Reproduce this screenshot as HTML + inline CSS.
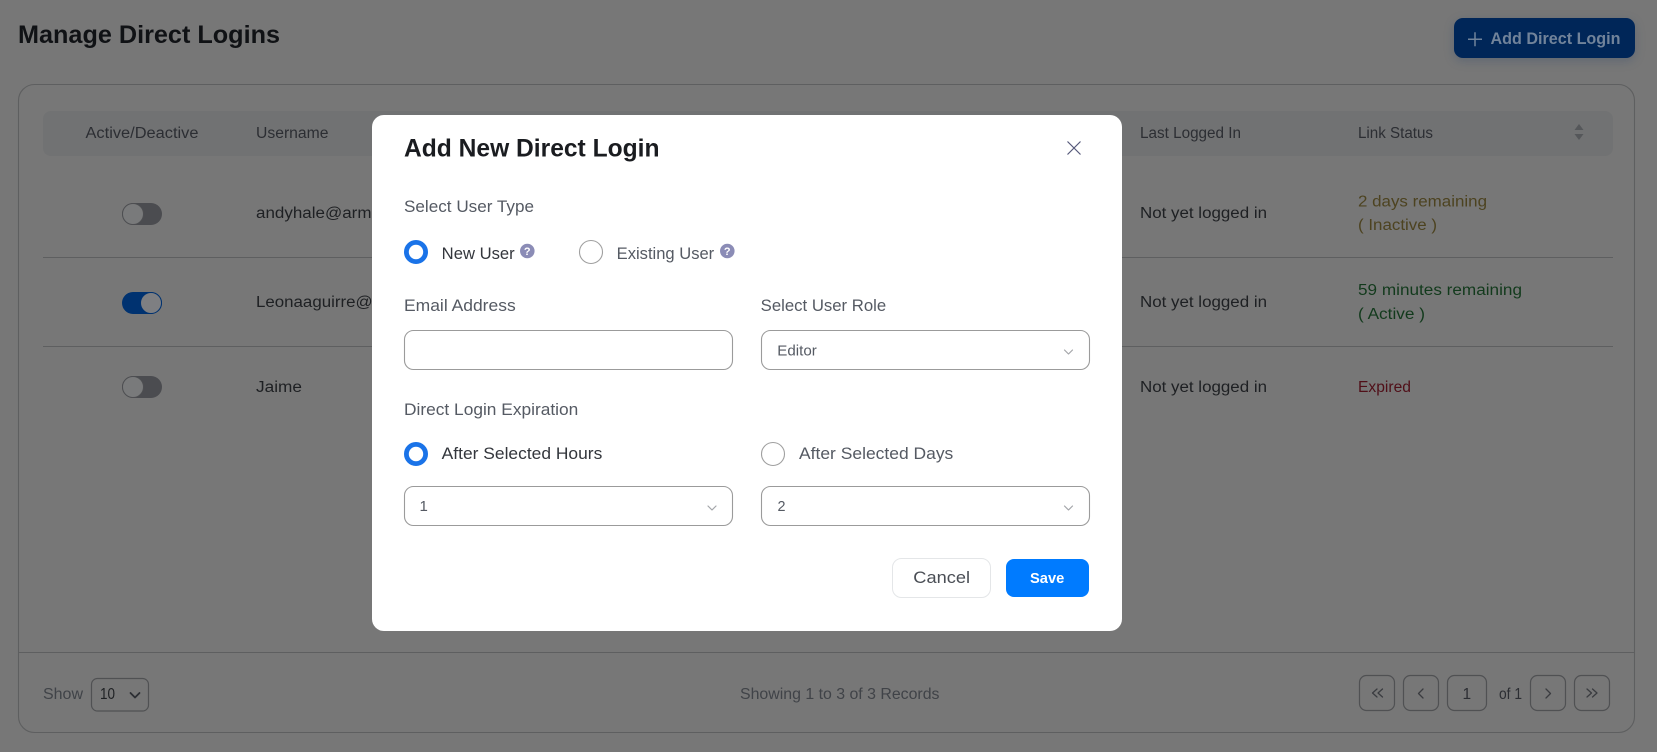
<!DOCTYPE html>
<html><head><meta charset="utf-8"><title>Manage Direct Logins</title>
<style>
html,body{margin:0;padding:0;background:#777777;width:1657px;height:752px;overflow:hidden}
svg{display:block}
text{font-family:"Liberation Sans",sans-serif;font-size:15.5px;fill:#1e2023}
.h{fill:#2c2e33}
.l{font-size:16.5px;fill:#555a63}
.d{font-size:16.5px;fill:#33363c}
.m{fill:#404348;font-size:15.5px}
.sq{fill:none;stroke:#505153;stroke-width:1.2}
.ch{fill:none;stroke:#3a3c40;stroke-width:1.3;stroke-linecap:round;stroke-linejoin:round}
.sc{fill:none;stroke:#a4a6aa;stroke-width:1.2;stroke-linecap:round;stroke-linejoin:round}
.ip{fill:#fff;stroke:#9b9b9b;stroke-width:1.1}
</style></head><body>
<svg width="1657" height="752" viewBox="0 0 1657 752" xmlns="http://www.w3.org/2000/svg">
<rect width="1657" height="752" fill="#777777"/>
<text x="18" y="43" textLength="262" lengthAdjust="spacingAndGlyphs" style="font-size:25px;font-weight:700;fill:#101215">Manage Direct Logins</text>

<rect x="1454" y="18" width="181" height="40" rx="9" fill="#002658" style="filter:drop-shadow(0 3px 5px rgba(0,40,100,.2))"/>
<path d="M1468 39.2h14M1475 32.2v14" stroke="#71839a" stroke-width="1.5" fill="none"/>
<text x="1490.5" y="44" textLength="130" lengthAdjust="spacingAndGlyphs" style="font-size:17px;font-weight:700;fill:#71839a">Add Direct Login</text>

<rect x="18.5" y="84.5" width="1616" height="648" rx="16" fill="#777777" stroke="#5e5f60" stroke-width="1.1"/>
<rect x="43" y="111" width="1570" height="45" rx="8" fill="#717273"/>
<text class="h" x="85.5" y="138" textLength="113" lengthAdjust="spacingAndGlyphs">Active/Deactive</text>
<text class="h" x="256" y="138" textLength="72.5" lengthAdjust="spacingAndGlyphs">Username</text>
<text class="h" x="1140" y="138" textLength="101" lengthAdjust="spacingAndGlyphs">Last Logged In</text>
<text class="h" x="1358" y="138" textLength="75" lengthAdjust="spacingAndGlyphs">Link Status</text>
<path d="M1579 124l4.5 6h-9zM1579 140l4.5-6h-9z" fill="#55575a"/>

<path d="M43 257.5H1613M43 346.5H1613M18 652.5H1635" stroke="#5e5f60" stroke-width="1" fill="none"/>

<rect x="122" y="203" width="40" height="22" rx="11" fill="#4b4c50"/>
<circle cx="133" cy="214" r="10.5" fill="#797a7b" stroke="#4e4f52" stroke-width="1"/>
<rect x="122" y="292" width="40" height="22" rx="11" fill="#003270"/>
<circle cx="151" cy="303" r="10.5" fill="#7e7f82" stroke="#003270" stroke-width="1"/>
<rect x="122" y="376" width="40" height="22" rx="11" fill="#4b4c50"/>
<circle cx="133" cy="387" r="10.5" fill="#797a7b" stroke="#4e4f52" stroke-width="1"/>

<text x="256" y="218" textLength="124" lengthAdjust="spacingAndGlyphs">andyhale@arms</text>
<text x="256" y="307" textLength="126" lengthAdjust="spacingAndGlyphs">Leonaaguirre@a</text>
<text x="256" y="392" textLength="46" lengthAdjust="spacingAndGlyphs">Jaime</text>
<text x="1140" y="218" textLength="127" lengthAdjust="spacingAndGlyphs">Not yet logged in</text>
<text x="1140" y="307" textLength="127" lengthAdjust="spacingAndGlyphs">Not yet logged in</text>
<text x="1140" y="392" textLength="127" lengthAdjust="spacingAndGlyphs">Not yet logged in</text>
<text x="1358" y="206.5" textLength="129" lengthAdjust="spacingAndGlyphs" style="fill:#4d4320">2 days remaining</text>
<text x="1358" y="230" textLength="79" lengthAdjust="spacingAndGlyphs" style="fill:#4d4320">( Inactive )</text>
<text x="1358" y="295" textLength="164" lengthAdjust="spacingAndGlyphs" style="fill:#123a1c">59 minutes remaining</text>
<text x="1358" y="319" textLength="67" lengthAdjust="spacingAndGlyphs" style="fill:#123a1c">( Active )</text>
<text x="1358" y="392" textLength="53" lengthAdjust="spacingAndGlyphs" style="fill:#500f18">Expired</text>

<text class="m" x="43" y="699" textLength="40" lengthAdjust="spacingAndGlyphs">Show</text>
<rect class="sq" x="91.5" y="678.5" width="57" height="32.5" rx="6"/>
<text x="100" y="699" textLength="15" lengthAdjust="spacingAndGlyphs">10</text>
<path d="M130.5 693l4.5 4.5 4.5-4.5" fill="none" stroke="#2c2e33" stroke-width="1.8" stroke-linecap="round" stroke-linejoin="round"/>
<text class="m" x="740" y="699" textLength="199.5" lengthAdjust="spacingAndGlyphs">Showing 1 to 3 of 3 Records</text>

<rect class="sq" x="1359.5" y="675.5" width="35" height="35" rx="7"/>
<rect class="sq" x="1403.5" y="675.5" width="35" height="35" rx="7"/>
<rect class="sq" x="1447.5" y="675.5" width="39" height="35" rx="7"/>
<rect class="sq" x="1530.5" y="675.5" width="35" height="35" rx="7"/>
<rect class="sq" x="1574.5" y="675.5" width="35" height="35" rx="7"/>
<path class="ch" d="M1377 689l-4.500 4 4.500 4M1382.500 689l-4.500 4 4.500 4"/>
<path class="ch" d="M1423 689l-4.500 4.500 4.500 4.500"/>
<text x="1462.500" y="699" style="fill:#2c2e33">1</text>
<text x="1499" y="699" textLength="23" lengthAdjust="spacingAndGlyphs" style="fill:#2c2e33">of 1</text>
<path class="ch" d="M1546 689l4.500 4.500-4.500 4.500"/>
<path class="ch" d="M1587 689l4.500 4-4.500 4M1592.500 689l4.500 4-4.500 4"/>

<rect x="372" y="115" width="750" height="516" rx="12" fill="#fff"/>
<text x="404" y="156.500" textLength="255.500" lengthAdjust="spacingAndGlyphs" style="font-size:25px;font-weight:700;fill:#1a1c20">Add New Direct Login</text>
<path d="M1067.500 141.500l13 13M1080.500 141.500l-13 13" stroke="#55587a" stroke-width="1.2" fill="none"/>

<text class="l" x="404" y="212" textLength="130" lengthAdjust="spacingAndGlyphs">Select User Type</text>
<circle cx="416" cy="252" r="9.600" fill="#fff" stroke="#1a73e8" stroke-width="4.800"/>
<text class="d" x="441.700" y="259" textLength="73" lengthAdjust="spacingAndGlyphs">New User</text>
<circle cx="527.300" cy="251" r="7.300" fill="#8b8cb6"/>
<text x="527.300" y="255" text-anchor="middle" style="font-size:11px;font-weight:700;fill:#fff">?</text>
<circle cx="591" cy="252" r="11.500" fill="#fff" stroke="#a0a0a0" stroke-width="1.100"/>
<text class="l" x="616.700" y="259" textLength="97.500" lengthAdjust="spacingAndGlyphs">Existing User</text>
<circle cx="727.300" cy="251" r="7.300" fill="#8b8cb6"/>
<text x="727.300" y="255" text-anchor="middle" style="font-size:11px;font-weight:700;fill:#fff">?</text>

<text class="l" x="404" y="311" textLength="111.700" lengthAdjust="spacingAndGlyphs">Email Address</text>
<text class="l" x="760.700" y="311" textLength="125.500" lengthAdjust="spacingAndGlyphs">Select User Role</text>
<rect class="ip" x="404.500" y="330.500" width="328" height="39" rx="9"/>
<rect class="ip" x="761.500" y="330.500" width="328" height="39" rx="9"/>
<text x="777.300" y="355.500" textLength="39.500" lengthAdjust="spacingAndGlyphs" style="font-size:15px;fill:#555a63">Editor</text>
<path class="sc" d="M1064.500 350l4 4 4-4"/>

<text class="l" x="404" y="415" textLength="174.300" lengthAdjust="spacingAndGlyphs">Direct Login Expiration</text>
<circle cx="416" cy="454" r="9.600" fill="#fff" stroke="#1a73e8" stroke-width="4.800"/>
<text class="d" x="441.700" y="459" textLength="160.600" lengthAdjust="spacingAndGlyphs">After Selected Hours</text>
<circle cx="773" cy="454" r="11.500" fill="#fff" stroke="#a0a0a0" stroke-width="1.100"/>
<text class="l" x="799" y="459" textLength="154.300" lengthAdjust="spacingAndGlyphs">After Selected Days</text>
<rect class="ip" x="404.500" y="486.500" width="328" height="39" rx="9"/>
<rect class="ip" x="761.500" y="486.500" width="328" height="39" rx="9"/>
<text x="419.500" y="511" style="font-size:15px;fill:#555a63">1</text>
<text x="777.500" y="511" textLength="8" lengthAdjust="spacingAndGlyphs" style="font-size:15px;fill:#555a63">2</text>
<path class="sc" d="M708 506l4 4 4-4"/>
<path class="sc" d="M1064.500 506l4 4 4-4"/>

<rect x="892.500" y="558.500" width="98" height="39" rx="9" fill="#fff" stroke="#e4e6e8" stroke-width="1"/>
<text x="913.300" y="583" textLength="56.700" lengthAdjust="spacingAndGlyphs" style="font-size:17px;fill:#4a4e55">Cancel</text>
<rect x="1006" y="559" width="83" height="38" rx="8" fill="#007bff"/>
<text x="1030" y="583" textLength="34.300" lengthAdjust="spacingAndGlyphs" style="font-size:15px;font-weight:700;fill:#fff">Save</text>
</svg>
</body></html>
